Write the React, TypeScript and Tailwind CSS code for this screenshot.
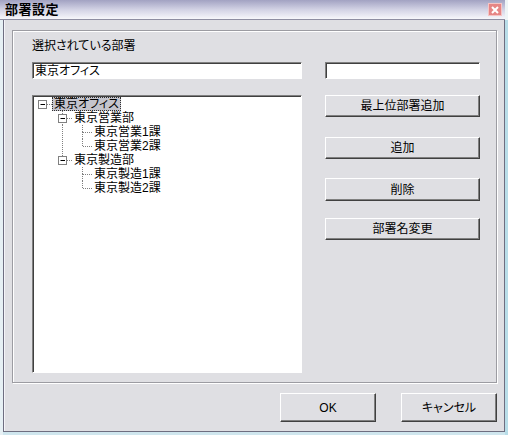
import React from 'react';

type Node = {
  label: string;
  level: number;
  last: boolean;
  hasChildren?: boolean;
  selected?: boolean;
  pass: number[];
};

const nodes: Node[] = [
  { label: '東京オフィス', level: 0, last: true, hasChildren: true, selected: true, pass: [] },
  { label: '東京営業部', level: 1, last: false, hasChildren: true, pass: [] },
  { label: '東京営業1課', level: 2, last: false, pass: [1] },
  { label: '東京営業2課', level: 2, last: true, pass: [1] },
  { label: '東京製造部', level: 1, last: true, hasChildren: true, pass: [] },
  { label: '東京製造1課', level: 2, last: false, pass: [] },
  { label: '東京製造2課', level: 2, last: true, pass: [] },
];

const font = "font-['Liberation_Sans','Noto_Sans_CJK_JP',sans-serif] [font-feature-settings:'palt']";
const btn =
  'flex items-center justify-center bg-[#dfdfe3] border border-t-white border-l-white border-r-[#404040] border-b-[#404040] shadow-[inset_-1px_-1px_0_#808080] text-[12px] leading-[14px] text-black';
const sunken =
  'bg-white border border-t-[#808080] border-l-[#808080] border-r-white border-b-white shadow-[inset_1px_1px_0_#404040]';

function Cell({ node, i }: { node: Node; i: number }) {
  const own = i === node.level;
  const dots = { stroke: '#808080', strokeDasharray: '1 1' };
  return (
    <svg width="20" height="14" className="shrink-0">
      {!own && node.pass.includes(i) && <line x1="9.5" y1="0" x2="9.5" y2="14" {...dots} />}
      {own && node.level > 0 && <line x1="9.5" y1="0" x2="9.5" y2="7" {...dots} />}
      {own && node.level > 0 && !node.last && <line x1="9.5" y1="7" x2="9.5" y2="14" {...dots} />}
      {own && <line x1={node.hasChildren ? 14 : 10} y1="7.5" x2="20" y2="7.5" {...dots} />}
      {own && node.hasChildren && (
        <g>
          <rect x="5.5" y="3.5" width="8" height="8" fill="white" stroke="#808080" />
          <line x1="7.5" y1="7.5" x2="12" y2="7.5" stroke="black" />
        </g>
      )}
    </svg>
  );
}

function TreeRow({ node }: { node: Node }) {
  return (
    <div className="flex h-[14px] items-center">
      {Array.from({ length: node.level + 1 }, (_, i) => (
        <Cell key={i} node={node} i={i} />
      ))}
      <span
        className={`-ml-[1px] h-[14px] px-[1px] text-[12px] leading-[12px] text-black whitespace-nowrap border border-dotted ${
          node.selected ? 'bg-[#c4c4cc] border-[#303030]' : 'border-transparent'
        }`}
      >
        {node.label}
      </span>
    </div>
  );
}

export default function App() {
  return (
    <div className={`w-[508px] h-[435px] overflow-hidden bg-[#cfe6ee] flex flex-col ${font}`}>
      {/* title bar */}
      <div className="flex shrink-0">
        <div className="w-[505px] h-[20px] flex items-center justify-between pl-[5px] pr-[3px] bg-gradient-to-b from-[#a2a2c2] via-[#d2d2e4] to-[#f7f7fb] border-b border-[#8e8ea2]">
          <span className="text-[13px] font-bold leading-[14px] text-black tracking-[0.5px]">部署設定</span>
          <div className="w-[14px] h-[13px] bg-[#e68585] border border-[#f5c4c4] flex items-center justify-center">
            <svg width="8" height="8" viewBox="0 0 8 8">
              <path d="M1 1L7 7M7 1L1 7" stroke="white" strokeWidth="2" />
            </svg>
          </div>
        </div>
        <div className="flex-1 bg-[#eef4f6]" />
      </div>

      <div className="flex flex-1">
        <div className="w-[3px] bg-[#e6f0f4]" />
        {/* window body */}
        <div className="w-[502px] h-[412px] bg-[#dfdfe3] border border-t-0 border-[#6e6e80] shadow-[inset_1px_0_0_#f4f4f8] flex flex-col pl-[8px] pt-[10px]">
          <div className="w-[485px] h-[353px] border border-[#9c9ca2] shadow-[inset_1px_1px_0_#fff,1px_1px_0_#fff] flex gap-[23px] pl-[19px] pt-[8px]">
            <div className="w-[270px] flex flex-col">
              <div className="h-[14px] text-[12px] leading-[14px] text-black">選択されている部署</div>
              <div className={`mt-[9px] h-[17px] ${sunken} flex items-center pl-[2px] text-[12px] leading-[14px] text-black`}>
                東京オフィス
              </div>
              <div className={`mt-[16px] h-[278px] ${sunken} pt-[1px]`}>
                {nodes.map((n) => (
                  <TreeRow key={n.label} node={n} />
                ))}
              </div>
            </div>
            <div className="w-[155px] flex flex-col">
              <div className={`mt-[23px] h-[17px] ${sunken}`} />
              <button className={`mt-[16px] h-[22px] ${btn}`}>最上位部署追加</button>
              <button className={`mt-[20px] h-[22px] ${btn}`}>追加</button>
              <button className={`mt-[19px] h-[23px] ${btn}`}>削除</button>
              <button className={`mt-[17px] h-[22px] ${btn}`}>部署名変更</button>
            </div>
          </div>
          <div className="w-[485px] mt-[10px] flex justify-end gap-[25px]">
            <button className={`w-[96px] h-[29px] ${btn}`}>OK</button>
            <button className={`w-[96px] h-[29px] ${btn}`}>キャンセル</button>
          </div>
        </div>
        <div className="flex-1 bg-[#b8dde8]" />
      </div>
    </div>
  );
}
